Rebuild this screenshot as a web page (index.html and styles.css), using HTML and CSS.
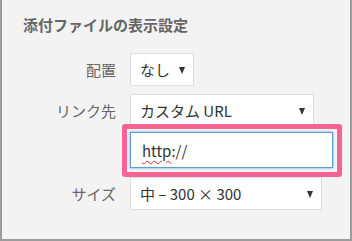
FILE: index.html
```html
<!doctype html>
<html>
	<head>
		<meta charset="utf-8">
		<title>添付ファイルの表示設定</title>
		<link rel="stylesheet" href="styles.css">
	</head>
	<body>
		<div class="panel">
			<h2 class="panel-title">添付ファイルの表示設定</h2>
			<div class="form-row first">
				<span class="label">配置</span>
				<div class="select small"><span>なし</span><span class="arrow"></span></div>
			</div>
			<div class="form-row">
				<span class="label">リンク先</span>
				<div class="select medium"><span>カスタム URL</span><span class="arrow"></span></div>
			</div>
			<div class="form-row url-row">
				<span class="label"></span>
				<div class="highlight">
					<div class="url-input"><span class="misspelled">http</span>://</div>
				</div>
			</div>
			<div class="form-row size-row">
				<span class="label">サイズ</span>
				<div class="select wide"><span>中 – 300 × 300</span><span class="arrow"></span></div>
			</div>
		</div>
	</body>
</html>
```

FILE: styles.css
```css
html, body {
	margin: 0;
	padding: 0;
}

body {
	font-family: "Noto Sans CJK JP", sans-serif;
	font-size: 15px;
	background-color: #f3f3f3;
}

.panel {
	width: 352px;
	height: 241px;
	box-sizing: border-box;
	border-left: 2px solid #9c9c9c;
	border-right: 2px solid #9c9c9c;
	border-bottom: 2px solid #9c9c9c;
	padding: 15px 0 0 21px;
	background-color: #f3f3f3;
}

.panel-title {
	margin: 0;
	font-size: 15px;
	line-height: 20px;
	font-weight: bold;
	color: #666;
}

.form-row {
	display: grid;
	grid-template-columns: 93px 1fr;
	column-gap: 14px;
	align-items: center;
	margin-top: 8px;
}

.form-row.first {
	margin-top: 18px;
}

.form-row.url-row {
	margin-top: 5px;
}

.form-row.size-row {
	margin-top: 9px;
}

.label {
	text-align: right;
	color: #666;
	line-height: 20px;
}

.select {
	box-sizing: border-box;
	height: 33px;
	display: flex;
	align-items: center;
	justify-content: space-between;
	padding: 0 8px 0 9px;
	border: 1px solid #ddd;
	background-color: #fff;
	color: #333;
}

.select.small {
	width: 64px;
}

.select.medium {
	width: 184px;
}

.select.wide {
	width: 192px;
}

.arrow {
	width: 0;
	height: 0;
	border-left: 3.5px solid transparent;
	border-right: 3.5px solid transparent;
	border-top: 7px solid #333;
	margin-top: 2px;
}

.highlight {
	position: relative;
	width: 203px;
}

.highlight::after {
	content: "";
	position: absolute;
	left: -8px;
	right: -9px;
	top: -8px;
	bottom: -9px;
	border: 5px solid #f56393;
	border-radius: 3px;
}

.url-input {
	box-sizing: border-box;
	height: 36px;
	display: flex;
	align-items: center;
	padding-left: 11px;
	border: 1px solid #5b9dd9;
	box-shadow: 0 0 2px rgba(30, 140, 190, 0.8);
	background-color: #fff;
	color: #333;
}

.misspelled {
	text-decoration: underline wavy #e02020;
	text-decoration-thickness: 1px;
	text-underline-offset: 3px;
}
```
